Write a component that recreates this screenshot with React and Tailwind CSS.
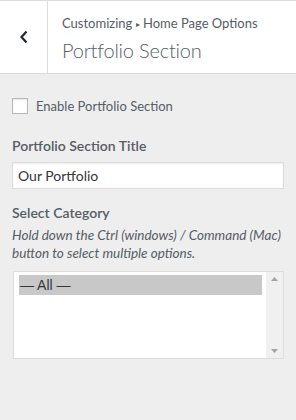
import React from 'react';

const font = { fontFamily: '"Segoe UI", Lato, "Noto Sans", sans-serif' };

export default function App() {
  return (
    <div className="w-[296px] h-[420px] bg-[#eeeeee] text-[#555d66] overflow-hidden" style={font}>
      {/* Header */}
      <div className="flex h-[74px] bg-white border-t border-b border-[#dddddd]">
        <button className="w-[48px] flex items-center justify-center border-r border-[#dddddd] text-[#23282d]">
          <svg width="10" height="14" viewBox="0 0 10 14" fill="none">
            <path d="M7.5 1.5 L2.5 7 L7.5 12.5" stroke="currentColor" strokeWidth="2.2" />
          </svg>
        </button>
        <div className="flex flex-col pl-[14px] pt-[12px]">
          <span className="text-[13px] leading-[20px] text-[#555d66]">
            Customizing <span className="text-[8px] align-[1px]">▸</span> Home Page Options
          </span>
          <span className="mt-[2px] text-[20px] leading-[28px] font-light tracking-[-0.2px] text-[#555d66]">Portfolio Section</span>
        </div>
      </div>

      {/* Body */}
      <div className="px-[12px] pt-[24px]">
        <label className="flex items-center gap-[8px]">
          <span className="w-[16px] h-[16px] bg-white border border-[#b4b9be] shadow-[inset_0_1px_2px_rgba(0,0,0,0.1)]" />
          <span className="text-[13px] leading-[16px]">Enable Portfolio Section</span>
        </label>

        <div className="mt-[22px]">
          <div className="text-[14px] font-semibold leading-[20px]">Portfolio Section Title</div>
          <div className="mt-[6px] h-[27px] bg-white border border-[#dddddd] shadow-[inset_0_1px_2px_rgba(0,0,0,0.07)] flex items-center px-[5px] text-[14px] text-[#32373c]">
            Our Portfolio
          </div>
        </div>

        <div className="mt-[14px]">
          <div className="text-[14px] font-semibold leading-[20px]">Select Category</div>
          <div className="mt-[3px] text-[13.5px] italic leading-[18px]">
            Hold down the Ctrl (windows) / Command (Mac) button to select multiple options.
          </div>
          <div className="mt-[9px] ml-[1px] h-[88px] bg-white border border-[#dddddd] flex">
            <div className="flex-1 pl-[5px] pt-[3px] pr-[4px]">
              <div className="h-[20px] bg-[#c8c8c8] flex items-center px-[1px] text-[14px] text-[#32373c]" style={{ fontFamily: '"Liberation Sans", Arial, sans-serif' }}>
                — All —
              </div>
            </div>
            <div className="w-[17px] bg-[#f0f0f0] flex flex-col items-center justify-between py-[5px]">
              <svg width="7" height="4" viewBox="0 0 7 4"><path d="M0 4 L3.5 0 L7 4 Z" fill="#a3a3a3" /></svg>
              <svg width="7" height="4" viewBox="0 0 7 4"><path d="M0 0 L3.5 4 L7 0 Z" fill="#a3a3a3" /></svg>
            </div>
          </div>
        </div>
      </div>
    </div>
  );
}
